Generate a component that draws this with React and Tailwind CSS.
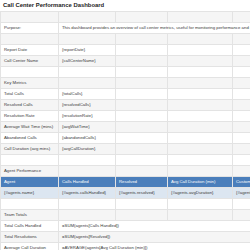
const rows = [
  { a: "", b: "" },
  { a: "Purpose:", b: "This dashboard provides an overview of call center metrics, useful for monitoring performance and operational efficiency.", span: true },
  { a: "", b: "" },
  { a: "Report Date", b: "{reportDate}" },
  { a: "Call Center Name", b: "{callCenterName}" },
  { a: "", b: "" },
  { a: "Key Metrics", b: "" },
  { a: "Total Calls", b: "{totalCalls}" },
  { a: "Resolved Calls", b: "{resolvedCalls}" },
  { a: "Resolution Rate", b: "{resolutionRate}" },
  { a: "Average Wait Time (mins)", b: "{avgWaitTime}" },
  { a: "Abandoned Calls", b: "{abandonedCalls}" },
  { a: "Call Duration (avg mins)", b: "{avgCallDuration}" },
  { a: "", b: "" },
  { a: "Agent Performance", b: "" },
  { header: ["Agent", "Calls Handled", "Resolved", "Avg Call Duration (min)", "Customer Satisfaction"] },
  { agent: ["{#agents.name}", "{#agents.callsHandled}", "{#agents.resolved}", "{#agents.avgDuration}", "{#agents.satisfaction}{/agents}"] },
  { a: "", b: "" },
  { a: "Team Totals", b: "" },
  { a: "Total Calls Handled", b: "=SUM(agents[Calls Handled])", span: true },
  { a: "Total Resolutions", b: "=SUM(agents[Resolved])", span: true },
  { a: "Average Call Duration", b: "=AVERAGE(agents[Avg Call Duration (min)])", span: true },
];

const cell = "h-[11px] px-[3px] border border-[#e3e3e3] whitespace-nowrap overflow-hidden align-middle";

export default function App() {
  return (
    <div className="w-[250px] h-[250px] overflow-hidden bg-white text-[#3a3a3a] font-['Liberation_Sans',Arial,sans-serif]">
      <div className="h-[11px] pl-[3px] flex items-center text-[5.9px] font-bold text-[#222]">
        Call Center Performance Dashboard
      </div>
      <table className="table-fixed border-collapse w-[310px] text-[4.3px] leading-none">
        <colgroup>
          <col className="w-[58px]" />
          <col className="w-[57px]" />
          <col className="w-[52px]" />
          <col className="w-[65px]" />
          <col className="w-[78px]" />
        </colgroup>
        <tbody>
          {rows.map((r, i) => {
            const bg = i % 2 === 0 ? "bg-[#f5f5f5]" : "bg-white";
            if (r.header) {
              return (
                <tr key={i} className="bg-[#4a7ebb] text-white">
                  {r.header.map(h => (
                    <td key={h} className={cell + " border-[#3f6fa8]"}>{h}</td>
                  ))}
                </tr>
              );
            }
            if (r.agent) {
              return (
                <tr key={i} className="bg-[#dce6f1]">
                  {r.agent.map(h => (
                    <td key={h} className={cell + " border-[#c9d6e6]"}>{h}</td>
                  ))}
                </tr>
              );
            }
            return (
              <tr key={i} className={bg}>
                <td className={cell}>{r.a}</td>
                {r.span ? (
                  <td colSpan={4} className={cell}>{r.b}</td>
                ) : (
                  <>
                    <td className={cell}>{r.b}</td>
                    <td className={cell}></td>
                    <td className={cell}></td>
                    <td className={cell}></td>
                  </>
                )}
              </tr>
            );
          })}
        </tbody>
      </table>
    </div>
  );
}
